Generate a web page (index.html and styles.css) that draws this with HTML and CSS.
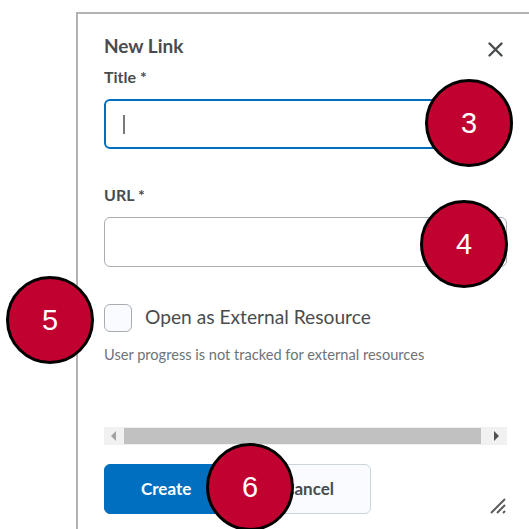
FILE: index.html
```html
<!DOCTYPE html>
<html lang="en">
<head>
<meta charset="utf-8">
<title>New Link</title>
<link rel="stylesheet" href="styles.css">
</head>
<body>
<div class="page">
  <section class="dialog">
    <header class="dialog-head">
      <h1 class="dialog-title">New Link</h1>
      <svg class="close" width="15" height="15" viewBox="0 0 15 15" aria-label="Close">
        <path d="M1.5 1.5 L13.5 13.5 M13.5 1.5 L1.5 13.5" stroke="#494c4e" stroke-width="2.4" stroke-linecap="round"/>
      </svg>
    </header>

    <label class="field-label">Title *</label>
    <div class="text-input focused"><span class="caret"></span></div>

    <label class="field-label url-label">URL *</label>
    <div class="text-input"></div>

    <div class="check-row">
      <span class="checkbox"></span>
      <span class="check-text">Open as External Resource</span>
    </div>
    <p class="help">User progress is not tracked for external resources</p>

    <div class="hscroll">
      <span class="arrow arrow-left"></span>
      <span class="thumb"></span>
      <span class="arrow arrow-right"></span>
    </div>

    <div class="actions">
      <button class="btn btn-primary">Create</button>
      <button class="btn btn-secondary">Cancel</button>
    </div>

    <svg class="grip" width="18" height="18" viewBox="0 0 18 18">
      <path d="M2 16 L16 2 M8 16 L16 8" stroke="#5a5a5a" stroke-width="2"/>
      <path d="M14 16 L16 14" stroke="#5a5a5a" stroke-width="2"/>
    </svg>
  </section>

  <span class="marker m3">3</span>
  <span class="marker m4">4</span>
  <span class="marker m5">5</span>
  <span class="marker m6">6</span>
</div>
</body>
</html>
```

FILE: styles.css
```css
html, body {
  margin: 0;
  padding: 0;
  background: #ffffff;
  overflow: hidden;
}

body {
  font-family: Lato, "Open Sans", sans-serif;
  color: #494c4e;
}

.page {
  position: relative;
  width: 529px;
  height: 529px;
  padding: 12px 0 0 76px;
  box-sizing: border-box;
}

.dialog {
  position: relative;
  height: 100%;
  box-sizing: border-box;
  border-left: 2px solid #b2b2b2;
  border-top: 2px solid #b2b2b2;
  padding: 20px 22px 0 26px;
  display: flex;
  flex-direction: column;
  align-items: stretch;
}

.dialog-head {
  display: flex;
  justify-content: space-between;
  align-items: flex-start;
  height: 23px;
}

.dialog-title {
  margin: 0;
  font-size: 19px;
  line-height: 23px;
  font-weight: 700;
  color: #494c4e;
}

.close {
  margin: 8px 4px 0 0;
}

.field-label {
  display: block;
  margin-top: 10px;
  font-size: 16px;
  line-height: 20px;
  font-weight: 700;
  color: #494c4e;
}

.url-label {
  margin-top: 36px;
}

.text-input {
  margin-top: 12px;
  height: 50px;
  box-sizing: border-box;
  border: 1px solid #a8adb2;
  border-radius: 6px;
  background: #fff;
  display: flex;
  align-items: center;
  padding-left: 18px;
}

.text-input.focused {
  border: 2px solid #006fbf;
  padding-left: 17px;
}

.caret {
  width: 2px;
  height: 19px;
  background: #7a7a7a;
}

.check-row {
  margin-top: 37px;
  display: flex;
  align-items: center;
  height: 28px;
}

.checkbox {
  width: 28px;
  height: 28px;
  box-sizing: border-box;
  border: 1px solid #a8adb2;
  border-radius: 6px;
  background: #f9fbff;
}

.check-text {
  margin-left: 13px;
  margin-bottom: 3px;
  font-size: 19.2px;
  color: #494c4e;
}

.help {
  margin: 13px 0 0;
  font-size: 14.6px;
  line-height: 20px;
  color: #6e7376;
}

.hscroll {
  margin-top: 62px;
  height: 18px;
  background: #f1f1f1;
  position: relative;
}

.thumb {
  position: absolute;
  left: 20px;
  top: 1px;
  width: 357px;
  height: 16px;
  background: #c1c1c1;
}

.arrow {
  position: absolute;
  top: 4px;
  width: 0;
  height: 0;
  border-top: 5px solid transparent;
  border-bottom: 5px solid transparent;
}

.arrow-left {
  left: 7px;
  border-right: 5px solid #a3a3a3;
}

.arrow-right {
  right: 8px;
  border-left: 5px solid #505050;
}

.actions {
  margin-top: 19px;
  display: flex;
  gap: 18px;
}

.btn {
  height: 50px;
  padding: 0 36px 2px;
  border-radius: 6px;
  font-family: Lato, "Open Sans", sans-serif;
  font-size: 17px;
  font-weight: 700;
  cursor: pointer;
}

.btn-primary {
  background: #006fbf;
  border: 1px solid #006fbf;
  color: #ffffff;
}

.btn-secondary {
  background: #f9fbff;
  border: 1px solid #cdd5dc;
  color: #494c4e;
}

.grip {
  position: absolute;
  left: 411px;
  top: 483px;
}

/* numbered callouts laid over the form */
.marker {
  position: absolute;
  width: 88px;
  height: 88px;
  box-sizing: border-box;
  border: 3px solid #000000;
  border-radius: 50%;
  background: #c10230;
  color: #ffffff;
  font-family: "Liberation Sans", Arial, sans-serif;
  font-size: 29px;
  display: flex;
  align-items: center;
  justify-content: center;
}

.m3 { left: 425px; top: 79px; }
.m4 { left: 420px; top: 200px; }
.m5 { left: 6px;   top: 276px; }
.m6 { left: 206px; top: 443px; }
```
